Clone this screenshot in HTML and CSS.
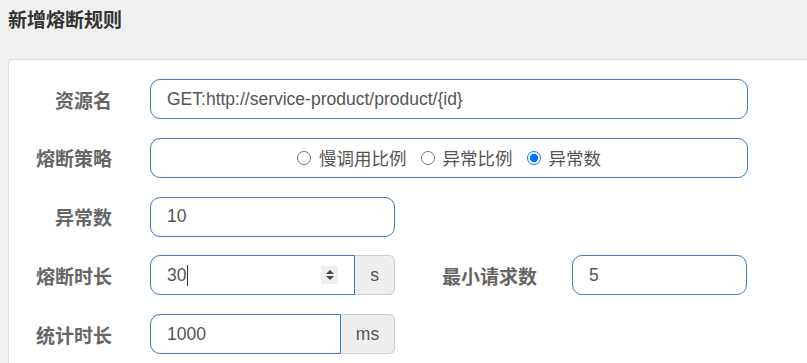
FILE: index.html
```html
<!DOCTYPE html>
<html lang="zh-CN">
<head>
<meta charset="utf-8">
<title>新增熔断规则</title>
<link rel="stylesheet" href="styles.css">
</head>
<body>
<h1 class="title">新增熔断规则</h1>
<div class="panel">
  <div class="row">
    <label class="label">资源名</label>
    <div class="field w-full">GET:http://service-product/product/{id}</div>
  </div>
  <div class="row">
    <label class="label">熔断策略</label>
    <div class="field w-full radios">
      <label class="opt"><input type="radio" name="s">慢调用比例</label>
      <label class="opt"><input type="radio" name="s">异常比例</label>
      <label class="opt"><input type="radio" name="s" checked>异常数</label>
    </div>
  </div>
  <div class="row">
    <label class="label">异常数</label>
    <div class="field w-half">10</div>
  </div>
  <div class="row">
    <label class="label">熔断时长</label>
    <div class="group w-half">
      <div class="field grow joined spin-wrap">30<span class="caret"></span>
        <span class="spinner"><svg width="10" height="12" viewBox="0 0 10 12"><path d="M1 5 L5 1 L9 5 Z M1 7 L5 11 L9 7 Z" fill="#444"/></svg></span>
      </div>
      <div class="addon addon-s">s</div>
    </div>
    <label class="label label2">最小请求数</label>
    <div class="field w-small">5</div>
  </div>
  <div class="row">
    <label class="label">统计时长</label>
    <div class="group w-half">
      <div class="field grow joined">1000</div>
      <div class="addon addon-ms">ms</div>
    </div>
  </div>
</div>
</body>
</html>
```
FILE: styles.css
```css
html, body {
  margin: 0;
  padding: 0;
  background: #f0f0f0;
  overflow: hidden;
  width: 807px;
  height: 363px;
  font-family: "Liberation Sans", Arial, "Noto Sans CJK SC", sans-serif;
}
.title {
  margin: 0;
  padding: 8px 0 0 8px;
  height: 59px;
  box-sizing: border-box;
  font-size: 19px;
  line-height: 22px;
  font-weight: bold;
  color: #333;
  font-family: "Noto Sans CJK SC", sans-serif;
}
.panel {
  margin-left: 8px;
  width: 799px;
  height: 304px;
  background: #fff;
  border: 1px solid #dcdcdc;
  border-right: none;
  border-bottom: none;
  border-radius: 5px 0 0 0;
  padding-top: 19px;
  box-sizing: border-box;
  overflow: hidden;
}
.row {
  display: flex;
  align-items: center;
  height: 40px;
  margin-bottom: 18.75px;
}
.label {
  width: 103px;
  text-align: right;
  margin-right: 38px;
  font-family: "Noto Sans CJK SC", sans-serif;
  font-weight: bold;
  font-size: 19px;
  color: #666;
  flex: none;
}
.label2 {
  width: 96px;
  margin-left: 46px;
  margin-right: 35px;
}
.field {
  box-sizing: border-box;
  height: 40px;
  border: 1px solid #3b7bbd;
  border-radius: 10px;
  padding: 0 16px;
  display: flex;
  align-items: center;
  font-size: 17.5px;
  color: #555;
  background: #fff;
  flex: none;
}
.w-full { width: 598px; }
.w-half { width: 245px; }
.w-small { width: 175px; }
.radios {
  justify-content: center;
  font-family: "Noto Sans CJK SC", sans-serif;
  font-size: 17.5px;
  color: #555;
}
.opt {
  display: inline-flex;
  align-items: center;
  margin: 0 7px;
}
.opt input {
  margin: 0 8px 0 0;
  width: 14px;
  height: 14px;
}
.group {
  display: flex;
  height: 40px;
  flex: none;
}
.grow { flex: 1; }
.joined {
  border-top-right-radius: 0;
  border-bottom-right-radius: 0;
}
.spin-wrap { position: relative; }
.caret {
  display: inline-block;
  width: 1px;
  height: 21px;
  background: #333;
  margin-left: 1px;
}
.spinner {
  position: absolute;
  right: 16px;
  top: 10px;
  width: 17px;
  height: 18px;
  background: #eee;
  display: flex;
  align-items: center;
  justify-content: center;
}
.addon {
  box-sizing: border-box;
  height: 40px;
  background: #eee;
  border: 1px solid #ccc;
  border-left: none;
  border-radius: 0 6px 6px 0;
  display: flex;
  align-items: center;
  justify-content: center;
  font-size: 17.5px;
  color: #555;
  flex: none;
}
.addon-s { width: 40px; }
.addon-ms { width: 54px; }
```
